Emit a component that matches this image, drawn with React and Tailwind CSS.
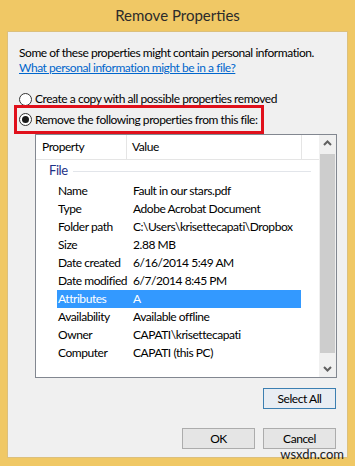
const rows = [
  ["Name", "Fault in our stars.pdf"],
  ["Type", "Adobe Acrobat Document"],
  ["Folder path", "C:\\Users\\krisettecapati\\Dropbox"],
  ["Size", "2.88 MB"],
  ["Date created", "6/16/2014 5:49 AM"],
  ["Date modified", "6/7/2014 8:45 PM"],
  ["Attributes", "A"],
  ["Availability", "Available offline"],
  ["Owner", "CAPATI\\krisettecapati"],
  ["Computer", "CAPATI (this PC)"],
];

function Radio({ checked }) {
  return (
    <span className="flex h-[13px] w-[13px] shrink-0 items-center justify-center rounded-full border border-[#333] bg-white">
      {checked && <span className="h-[7px] w-[7px] rounded-full bg-[#1a1a1a]" />}
    </span>
  );
}

function Button({ children, focused }) {
  return (
    <button
      className={
        "h-[21px] w-[73px] border text-[12px] text-black " +
        (focused ? "border-[#3c7fb1] bg-[#e8edf3]" : "border-[#acacac] bg-[#e5e5e5]")
      }
    >
      {children}
    </button>
  );
}

export default function App() {
  return (
    <div
      className="flex h-[466px] w-[355px] flex-col overflow-hidden whitespace-nowrap bg-[#f0c865] px-[7px] pb-[8px]"
      style={{ fontFamily: 'Lato, "Liberation Sans", sans-serif' }}
    >
      <div className="flex h-[31px] shrink-0 items-center justify-center text-[15px] text-[#2b2b2b]">
        Remove Properties
      </div>
      <div className="relative flex flex-1 flex-col border border-[#dcc07c] bg-[#f0f0f0] px-[11px] text-[12px] tracking-[-0.45px] text-black">
        <div className="mt-[13px] leading-[16px]">Some of these properties might contain personal information.</div>
        <div className="-mt-[1px] leading-[16px] text-[#0066cc] underline">What personal information might be in a file?</div>

        <div className="mt-[15px] flex items-center gap-[3px] leading-[16px]">
          <Radio />
          <span>Create a copy with all possible properties removed</span>
        </div>
        <div className="-ml-[5px] -mt-[2px] flex h-[29px] w-[250px] items-center gap-[3px] border-[3px] border-[#e0101b] pl-[2px] leading-[16px]">
          <Radio checked />
          <span>Remove the following properties from this file:</span>
        </div>

        <div className="ml-[16px] flex h-[244px] w-[302px] shrink-0 border border-[#828790] bg-white">
          <div className="flex flex-1 flex-col">
            <div className="flex h-[25px] items-center border-b border-[#e5e5e5]">
              <div className="flex h-full w-[91px] items-center border-r border-[#e5e5e5] pl-[6px]">Property</div>
              <div className="flex h-full w-[175px] items-center border-r border-[#e5e5e5] pl-[5px]">Value</div>
            </div>
            <div className="mt-[2px] flex h-[18px] items-center pl-[13px] pr-[8px] text-[13px] text-[#1e3287]">
              <span>File</span>
              <span className="ml-[5px] h-px flex-1 bg-[#e2e5ea]" />
            </div>
            <div className="mt-[2px] flex flex-col">
              {rows.map(([k, v]) => (
                <div
                  key={k}
                  className={
                    "ml-[21px] flex h-[18px] w-[244px] items-center " +
                    (k === "Attributes" ? "bg-[#3399ff] text-white" : "")
                  }
                >
                  <span className="w-[76px] shrink-0 pl-[1px]">{k}</span>
                  <span>{v}</span>
                </div>
              ))}
            </div>
          </div>
          <div className="flex w-[17px] flex-col items-center bg-[#f0f0f0]">
            <svg width="17" height="17" viewBox="0 0 17 17" className="shrink-0">
              <path d="M5 10 L8.5 6.5 L12 10" fill="none" stroke="#606060" strokeWidth="2" />
            </svg>
            <div className="mx-auto mt-[2px] h-[199px] w-[15px] bg-[#cdcdcd]" />
            <div className="flex-1" />
            <svg width="17" height="17" viewBox="0 0 17 17" className="shrink-0">
              <path d="M5 7 L8.5 10.5 L12 7" fill="none" stroke="#606060" strokeWidth="2" />
            </svg>
          </div>
        </div>

        <div className="mt-[10px] flex justify-end">
          <Button focused>Select All</Button>
        </div>
        <div className="mt-[19px] flex justify-end gap-[8px]">
          <Button>OK</Button>
          <Button>Cancel</Button>
        </div>
        <div className="absolute bottom-[-4px] right-[3px] text-[13px] leading-[14px] tracking-normal text-[#222]">wsxdn.com</div>
      </div>
    </div>
  );
}
